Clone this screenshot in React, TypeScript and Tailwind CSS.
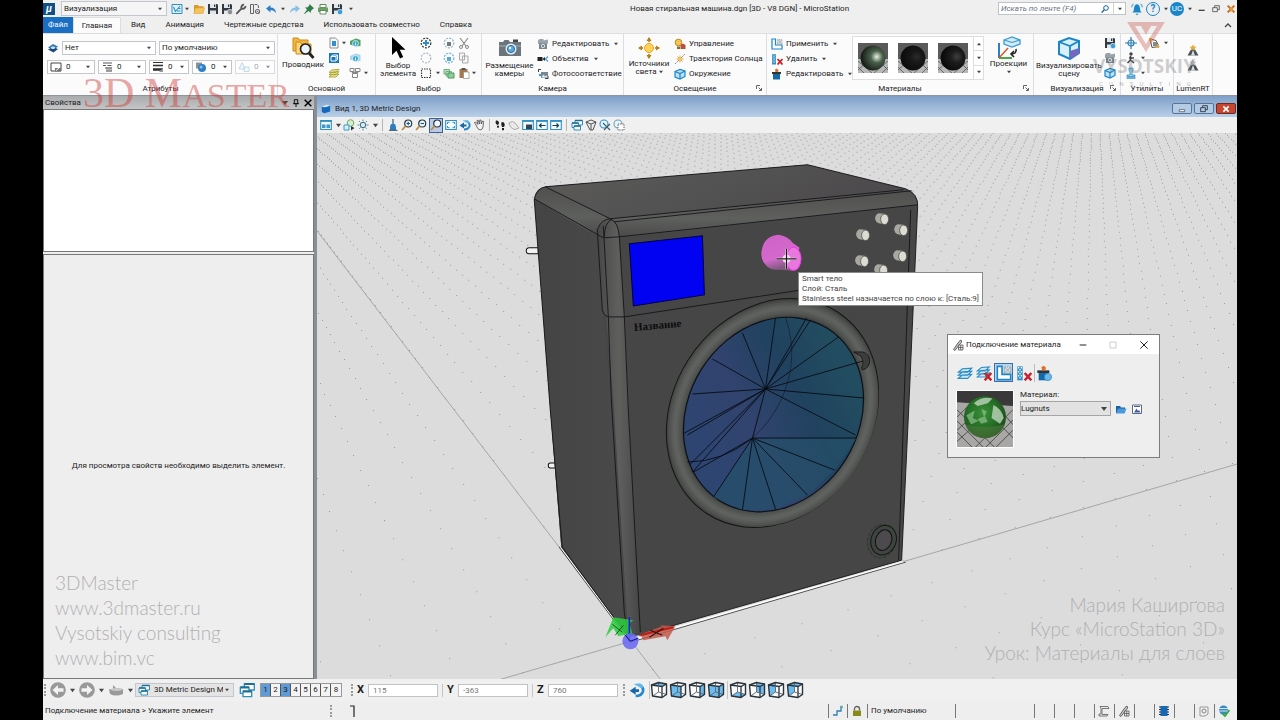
import type { ReactNode } from "react";
import clsx from "clsx";

type IconProps = { className?: string; children?: ReactNode };

const Icon = ({ className = "size-3", children }: IconProps) => (
  <svg viewBox="0 0 12 12" className={clsx("shrink-0", className)} fill="none" aria-hidden="true">
    {children}
  </svg>
);

const Caret = ({ className = "size-1" }: { className?: string }) => (
  <svg viewBox="0 0 6 4" className={clsx("shrink-0", className)} aria-hidden="true">
    <path d="M0 0h6L3 4z" fill="#444" />
  </svg>
);

/* ---------- icons ---------- */

const Floppy = ({ badge }: { badge?: string }) => (
  <Icon>
    <path d="M1 1h9l1 1v9H1z" fill="#333a42" />
    <path d="M3 1h6v4H3zM3 7.5h6V11H3z" fill="#dfe6ec" />
    <path d="M7 1.5h1.3v2.5H7z" fill="#333a42" />
    {badge && <circle cx="9" cy="9" r="2.7" fill={badge} stroke="#fff" strokeWidth=".6" />}
  </Icon>
);
const Folder = () => (
  <Icon>
    <path d="M1 10V2.5Q1 2 1.5 2H5l1 1.3h4.5V5H3z" fill="#d9992a" />
    <path d="M.8 10.5 2.5 4.8h9L10 10.5z" fill="#f5c35a" stroke="#d9992a" strokeWidth=".5" />
  </Icon>
);
const Wrench = () => (
  <Icon>
    <path d="M1.8 10.4 6.4 5.6M6.4 5.6Q5.7 3 8.3 1.6M6.4 5.6Q9 6.5 10.5 3.8" stroke="#555" strokeWidth="1.8" strokeLinecap="round" />
  </Icon>
);
const DocGear = () => (
  <Icon>
    <path d="M1.5 1.5h3v9h-3zM5.5 1.5h2.5l1.5 1.5v2" stroke="#666" />
    <circle cx="8.5" cy="8.5" r="2" stroke="#666" strokeWidth="1.2" />
    <circle cx="8.5" cy="8.5" r=".6" fill="#666" />
  </Icon>
);
const Undo = ({ flip, color = "#2c7fc7" }: { flip?: boolean; color?: string }) => (
  <Icon className={clsx("size-3", flip && "-scale-x-100")}>
    <path d="M1 5.500 5.500 2v2.500Q10.500 4.500 11 10 9 7.200 5.500 7.100V9.500z" fill={color} />
  </Icon>
);
const Pin = () => (
  <Icon>
    <path d="m6.500 1 4.500 4.300-1.200.6-2 2 .2 2L5.500 8 1.500 11 1 10.800 4 6.700 2 4.300l2.300.2 2-2z" fill="#2e7d4a" />
  </Icon>
);
const Printer = () => (
  <Icon>
    <path d="M3 1.500h6v3H3z" fill="#fff" stroke="#5d8a5a" />
    <path d="M1 4.500h10v4.500H1z" fill="#6ba160" />
    <path d="M3 7.500h6V11H3z" fill="#fff" stroke="#4b7a48" strokeWidth=".8" />
  </Icon>
);
const ViewChart = () => (
  <Icon>
    <path d="M1 1.500h10v9H1z" fill="#e2f2fb" stroke="#2f8fc4" />
    <path d="m2.500 4 2 4.500L9 3M6 8h3.500M7 5.500h2.500" stroke="#2f8fc4" strokeWidth="1.100" />
  </Icon>
);
const LayerStack = ({ color = "#2f8fc4", fill = "#cfe8f8", className }: { color?: string; fill?: string; className?: string }) => (
  <Icon className={className}>
    <path d="m1 10 3-2.500 7-.5-3 3zM1 7.700l3-2.500 7-.5-3 3zM1 5.400l3-2.500 7-.5-3 3z" fill={fill} stroke={color} strokeWidth=".9" />
  </Icon>
);
const RedCross = () => <path d="m6.500 6 5 5.500m0-5.500-5 5.500" stroke="#c8202a" strokeWidth="1.800" />;
const ColorSwatch = () => (
  <Icon>
    <path d="M1 2h10v8H1z" fill="#fff" stroke="#444" />
    <path d="M5 10.500V7h6v3.500z" fill="#777" />
    <path d="M6 9.500 9 7" stroke="#fff" />
  </Icon>
);
const LineStyle = () => (
  <Icon>
    <path d="M2 2h9M2 4.500h3m1.500 0h4M4 7h7M5 10h6" stroke="#555" strokeWidth="1.100" />
    <path d="M5 6h6v4.500H5z" fill="#888" fillOpacity=".6" />
  </Icon>
);
const LineWeight = () => (
  <Icon>
    <path d="M1 1.500h10" stroke="#333" />
    <path d="M1 4.500h10" stroke="#333" strokeWidth="1.600" />
    <path d="M1 8.500h10" stroke="#333" strokeWidth="2.600" />
    <path d="m7 11 4-4v4z" fill="#999" />
  </Icon>
);
const Transparency = () => (
  <Icon>
    <path d="M1 1.500h6v6H1z" fill="#8a939b" />
    <circle cx="7" cy="7" r="4" fill="#2f7fc4" />
    <circle cx="6" cy="6" r="1.500" fill="#8cc2ee" />
  </Icon>
);
const Priority = () => (
  <Icon>
    <path d="m4 1.500 3 6.500H1zM6 6h5v4.500H6z" stroke="#9cc6d6" fill="#eef7fa" />
  </Icon>
);
const LevelLayers = () => (
  <Icon>
    <path d="M1 5.500 6 2l5 2.500L6.500 8z" fill="#3577b8" />
    <path d="M1 7.500 6 5l5 2-4.500 3.500z" fill="#174a80" />
    <ellipse cx="6" cy="5.800" rx="2.200" ry="1.200" fill="#cfe3f4" />
  </Icon>
);
const Explorer = () => (
  <svg viewBox="0 0 24 24" className="size-6" fill="none" aria-hidden="true">
    <path d="M2 4V2h5l1.500 2H17v11H2z" fill="#f2b63e" stroke="#c98a1c" />
    <path d="M5 8V6h4l1.500 2H20v10H5z" fill="#ffd77a" stroke="#c98a1c" />
    <circle cx="14.500" cy="13" r="5" fill="#eaf5ff" stroke="#222" strokeWidth="1.700" />
    <path d="m18 17 4.500 5" stroke="#222" strokeWidth="2.800" />
  </svg>
);
const DocBlue = () => (
  <Icon>
    <path d="M2 1h5.500L10 3.500V11H2z" fill="#f2f8fd" stroke="#777" strokeWidth=".8" />
    <path d="M4 4h4v5H4z" fill="#2f8fd0" />
  </Icon>
);
const BlueBox = () => (
  <Icon>
    <path d="M1 1h10v10H1z" fill="#1779bf" />
    <path d="M3 4.500 5 3h4.500v4.500L8 9H3zM3 4.500h5V9M8 4.500 9.500 3" stroke="#fff" />
  </Icon>
);
const InfoTag = ({ color }: { color: string }) => (
  <Icon>
    <path d="m1 4 6-2.500L11.500 3v6l-5 .5L1 7.500z" fill={color} />
    <circle cx="6.500" cy="6.500" r="3" fill="#38a5c9" stroke="#fff" strokeWidth=".7" />
    <path d="M6.500 4.800v.8m0 .7v2" stroke="#fff" strokeWidth="1.100" />
  </Icon>
);
const KeyGrid = () => (
  <Icon>
    <path d="M1 1.500h4v3H1zM6.500 1.500H11v3H6.500zM3.500 6.500h5v4h-5zM6 4.500v2M3 4.500v1h6v-1" stroke="#888" />
  </Icon>
);
const CursorArrow = () => (
  <svg viewBox="0 0 16 24" className="h-6 w-4" aria-hidden="true">
    <path d="M2 1v18l4.500-4.200L10 22.500l3.200-1.500-3.400-7.200H15.500z" fill="#000" />
  </svg>
);
const DotRing = ({ color, center }: { color: string; center?: ReactNode }) => (
  <Icon>
    <circle cx="6" cy="6" r="4.800" stroke={color} strokeWidth="1.200" strokeDasharray="2 1.200" />
    {center}
  </Icon>
);
const Scissors = () => (
  <Icon>
    <path d="M2 1l6 8M10 1 4 9" stroke="#888" strokeWidth="1.100" />
    <circle cx="3" cy="10" r="1.500" stroke="#888" />
    <circle cx="9" cy="10" r="1.500" stroke="#888" />
  </Icon>
);
const Copy = ({ color = "#aaa", fill = "#f6f6f6" }: { color?: string; fill?: string }) => (
  <Icon>
    <path d="M1.500 1h5v7h-5zM4.500 4h5.500v7H4.500z" fill={fill} stroke={color} />
  </Icon>
);
const GreenCopies = () => (
  <Icon>
    <path d="M1 2.500h5.500V7H1zM3 4.500h5.500V9H3z" fill="#bfe3c4" stroke="#6ab07a" />
    <path d="M5 6h6v5H5z" fill="#8fd09a" stroke="#4f9a60" />
  </Icon>
);
const Paste = () => (
  <Icon>
    <path d="M1.500 2h8v9h-8z" fill="#a9764a" />
    <path d="M3.500 1h4v2h-4z" fill="#555" />
    <path d="M5.500 5H11v6.500H5.500z" fill="#fff" stroke="#888" strokeWidth=".7" />
  </Icon>
);
const Marquee = () => (
  <Icon>
    <path d="M1.500 2h9v8.500h-9z" stroke="#333" strokeDasharray="1.500 1" strokeWidth="1.100" />
  </Icon>
);
const BigCamera = () => (
  <svg viewBox="0 0 24 20" className="h-5 w-6" fill="none" aria-hidden="true">
    <path d="M1 4h4l1.500-2h4L12 4h11v14H1z" fill="#6c757c" />
    <path d="M1 8h22" stroke="#aab2b8" />
    <path d="M15 1.500h5V4h-5z" fill="#444" />
    <circle cx="13" cy="11" r="5.500" fill="#e5ecf2" />
    <circle cx="13" cy="11" r="3.600" fill="#58a9e0" stroke="#2d6ea8" />
    <circle cx="12" cy="10" r="1.200" fill="#fff" />
  </svg>
);
const CameraEdit = () => (
  <Icon>
    <path d="M1 2.500 2.500 1h4V6H1zM6.500 2.500 11 1.500v4l-4.500 1z" fill="#9aa3aa" />
    <path d="M2 5.500h8V11H2z" fill="#7b858d" />
    <circle cx="6" cy="8" r="2" fill="#e6eef4" />
    <circle cx="6" cy="8" r=".9" fill="#555" />
  </Icon>
);
const Lens = () => (
  <Icon>
    <path d="M.500 4h5v4h-5zM5.500 6 8 4v4z" fill="#222" />
    <path d="M11 3.500 8.500 6 11 8.500" stroke="#3b9cd9" strokeWidth="1.100" />
  </Icon>
);
const PhotoMatch = () => (
  <Icon>
    <path d="M1 1.500h3M1.500 1v3M11 8v3M8 10.500h3" stroke="#444" />
    <path d="M4 4h7v6H4z" fill="#7b858d" />
    <path d="m4.500 9.500 2-3 1.500 2 1.200-1.300 1.300 2.300z" fill="#e6eef4" />
    <circle cx="3" cy="7" r="1.200" fill="#3b9cd9" />
  </Icon>
);
const LightSource = () => (
  <svg viewBox="0 0 24 24" className="size-6" fill="none" aria-hidden="true">
    <path d="M12 2v20M2 12h20" stroke="#a97a1c" strokeWidth="1.500" />
    <path d="m12 1 2.600 4H9.400zM12 23l-2.600-4h5.200zM1 12l4-2.600v5.200zM23 12l-4 2.600V9.400z" fill="#b3801c" />
    <circle cx="12" cy="12" r="6" fill="#fbfbfc" />
    <circle cx="12" cy="12" r="4.500" fill="#ffd257" stroke="#e5a52a" />
  </svg>
);
const LightManage = () => (
  <Icon>
    <circle cx="4.500" cy="4.500" r="3.300" fill="#f7c74f" stroke="#b8862a" />
    <path d="M3 8.500h3V11H3z" fill="#8a6a2c" />
    <path d="M6.500 7 9 5.500 11.500 7v4h-5z" fill="#b8503a" />
  </Icon>
);
const SunPath = () => (
  <Icon>
    <path d="M6 2.500v7M2.500 6h7M3.500 3.500l5 5M8.500 3.500l-5 5" stroke="#e0a93a" />
    <path d="M1 11 11 1" stroke="#888" strokeDasharray="2 1" />
    <circle cx="6" cy="6" r="1.600" fill="#f3c14b" />
  </Icon>
);
const CubeBlue = () => (
  <Icon>
    <path d="m1 3.500 5-2 5 1.500v5.500l-5 2.500-5-2z" fill="#bfe1f7" stroke="#1c86c7" strokeWidth="1.200" />
    <path d="m1 3.500 5 2 5-2.500M6 5.500V11" stroke="#1c86c7" strokeWidth="1.200" />
  </Icon>
);
const ApplyMaterial = ({ className }: { className?: string }) => (
  <Icon className={className}>
    <path d="M1 1h3.500v6H11v4H1z" fill="#fff" stroke="#1c86c7" strokeWidth="1.200" />
    <path d="M6.500 1.500H11V6H6.500z" fill="#dfe4e8" stroke="#8c9499" strokeWidth=".7" strokeDasharray="1 .6" />
    <path d="m7 2 3.500 3.500M10.500 2 7 5.500" stroke="#8c9499" strokeWidth=".6" />
  </Icon>
);
const RemoveMaterial = ({ className }: { className?: string }) => (
  <Icon className={className}>
    <path d="M1 1h4v10.500H1z" fill="#2f8fc4" />
    <path d="M1.500 2h1m1 0h1M2.500 3.500h1M1.500 5h1m1 0h1M2.500 6.500h1M1.500 8h1m1 0h1M2.500 9.500h1" stroke="#e4f3fb" strokeWidth="1.100" />
    <RedCross />
  </Icon>
);
const EditMaterial = ({ badge, className }: { badge?: boolean; className?: string }) => (
  <Icon className={className}>
    <path d="M2 5h7v6.500H2z" fill="#1467a8" />
    <path d="M1 4h9v2H1z" fill="#333" />
    <path d="M4.500 4 4 1.500 6 .500 7.500 2 7 4z" fill="#e2702a" />
    {badge && <circle cx="9" cy="9" r="2.700" fill="#6cb8e8" stroke="#2f8fc4" strokeWidth=".6" />}
  </Icon>
);
const Projections = () => (
  <svg viewBox="0 0 24 24" className="size-6" fill="none" aria-hidden="true">
    <path d="m7 4 8-3 8 3v4l-8 3-8-3z" fill="#d3ebfa" stroke="#3a9ad3" strokeWidth="1.300" />
    <path d="m7 4 8 2.500L23 4" stroke="#3a9ad3" strokeWidth="1.100" />
    <path d="M2 7v15" stroke="#2f7fc4" strokeWidth="2" />
    <path d="M2 22h13" stroke="#4aa845" strokeWidth="2" />
    <path d="M2 22 11 12" stroke="#d8562a" strokeWidth="1.500" />
    <path d="M19 13q1 5-5 5m3-3-3 3 3 3" stroke="#222" strokeWidth="1.600" />
  </svg>
);
const RenderCube = () => (
  <svg viewBox="0 0 24 24" className="size-6" fill="none" aria-hidden="true">
    <path d="m2 6 10-4 10 3v12l-9 6-11-5z" fill="#d9effb" stroke="#1c86c7" strokeWidth="2" />
    <path d="M13 10v13M2 6l11 4 9-5" stroke="#1c86c7" strokeWidth="1.800" />
    <path d="m13 15 9-3v6l-9 5z" fill="#7468c0" />
  </svg>
);
const Crosshair = () => (
  <Icon>
    <path d="M6 0v12M0 6h12" stroke="#2f7fb4" strokeWidth="1.200" />
    <circle cx="6" cy="6" r="3" stroke="#2f7fb4" strokeWidth="1.200" />
  </Icon>
);
const PolyTool = () => (
  <Icon>
    <path d="m2 2 6 1.500 3 6-7 1z" stroke="#555" />
    <path d="M1 1h3v3H1zM8 8h3v3H8z" fill="#e0a93a" />
    <path d="M5 5h4v4H5z" fill="#888" />
  </Icon>
);
const Walker = () => (
  <Icon>
    <circle cx="6" cy="2" r="1.700" fill="#444" />
    <path d="M5.500 4v4l-3 3M5.500 8 9 11M4 6h5" stroke="#444" strokeWidth="1.600" />
  </Icon>
);
const Stamp = () => (
  <Icon>
    <path d="M4 1h4v2.500L7 5v3h3v1.500H2V8h3V5L4 3.500z" fill="#9fcfeb" stroke="#2f8fc4" strokeWidth=".8" />
    <path d="M1.500 11h9" stroke="#2f8fc4" strokeWidth="1.400" />
  </Icon>
);
const LumenTriangle = ({ color }: { color: string }) => (
  <Icon>
    <path d="m6 2 5.500 9.500H.500z" fill="#4a5257" />
    <path d="m6 6 2 5.500H4z" fill="#d8dde0" />
    <path d="m6 .500 1.200 2 2.300.2-1.700 1.600.5 2.300L6 5.500 3.700 6.600l.5-2.300-1.700-1.600 2.300-.2z" fill={color} />
  </Icon>
);
const Windows = ({ className }: { className?: string }) => (
  <Icon className={className}>
    <path d="M4 1.500h7.500V6H4z" fill="#fff" stroke="#2f8fb8" />
    <path d="M1 4h6.500v4.500H1z" fill="#fff" stroke="#2f8fb8" />
    <path d="M3 7h6.500v4H3z" fill="#fff" stroke="#2f8fb8" />
    <path d="M4 1.500h7.500M1 4h6.500M3 7h6.500" stroke="#1d6f98" strokeWidth="1.600" />
  </Icon>
);
const Screen = ({ glyph }: { glyph: "gear" | "left" | "right" | "fit" | "camera" }) => (
  <Icon>
    <path d="M.700 1.500h10.600v9H.700z" fill="#f4fafd" stroke="#2f8fc4" strokeWidth="1.100" />
    {glyph !== "fit" && <path d="M.5 2h11" stroke="#2f8fc4" strokeWidth="1.800" />}
    {glyph === "left" && <path d="M9.500 6.500h-6m2-2-2 2 2 2" stroke="#14405c" strokeWidth="1.200" />}
    {glyph === "right" && <path d="M2.500 6.500h6m-2-2 2 2-2 2" stroke="#14405c" strokeWidth="1.200" />}
    {glyph === "gear" && <path d="M2 5.500h3.500V9H2zM6.500 5.500H10V9H6.500z" fill="#3a9ac8" />}
    {glyph === "fit" && <path d="M2.500 5V3.300h2M7.500 3.300h2V5M9.500 7v1.700h-2M4.500 8.700h-2V7" stroke="#2f8fc4" />}
    {glyph === "camera" && <path d="M4 5.500h6V10H4z" fill="#345" />}
  </Icon>
);
const Sun = () => (
  <Icon>
    <path d="M6 .500v11M.500 6h11M2 2l8 8M10 2l-8 8" stroke="#4a9a8a" strokeDasharray="2 1 5 1" />
    <circle cx="6" cy="6" r="2.700" fill="#dfe9ee" stroke="#3d6c88" />
  </Icon>
);
const Broom = () => (
  <Icon>
    <path d="M6 0v5" stroke="#2c6aa0" strokeWidth="1.300" />
    <path d="M4 5h4l1 2.500V11H3V7.500z" fill="#2f7fbf" />
    <path d="M2 11.300h8.500" stroke="#3a4750" />
  </Icon>
);
const Magnify = ({ sign }: { sign?: string }) => (
  <Icon>
    <circle cx="7.200" cy="4.500" r="3.500" fill="#f2f8fb" stroke="#2a3a44" strokeWidth="1.200" />
    <path d="M4.700 7 1 11" stroke="#c08a3a" strokeWidth="1.800" />
    {sign && <path d={sign} stroke="#1a5c8c" strokeWidth="1.200" />}
  </Icon>
);
const Hand = () => (
  <Icon>
    <path d="M3 6 1.500 3.500l1-.5L5 5.500 4 1.500l1.200-.3L6.500 5 6.800 1 8 1.100 8.300 5 9.500 2l1 .3L10 8q-.5 3-3 3-2.500-.5-4-5z" fill="#f4f4f4" stroke="#4a4a4a" strokeWidth=".8" />
  </Icon>
);
const RotateView = ({ className }: { className?: string }) => (
  <Icon className={className}>
    <path d="M8.500 2.500Q11 4 10.500 7 9.500 10.500 5 10.500" stroke="#2486cc" strokeWidth="2" />
    <path d="M.500 6.500 5 3.500v2h2.500v2H5v2z" fill="#1668a8" />
    <path d="m3.500 1.500 5-.5 2.500 3-2 .500z" fill="#62b8ee" />
  </Icon>
);
const Feet = () => (
  <Icon>
    <path d="M2 1.500q2.500-.5 3 2 .2 2-1.500 2.500L2 5Q1 2.500 2 1.500zM2.800 7l2-.5.200 2-1.500.5z" fill="#222" />
    <path d="M8 3q2.500 0 2.700 2.300.1 1.700-.7 2.700H8Q6.500 4 8 3zM8 9h2v2.300H8z" fill="#222" />
  </Icon>
);
const Plane = () => (
  <Icon>
    <path d="M1 4q4-3 6 0l4 5-4 1.500q-5-1-6-6.500z" fill="#e9e9e9" stroke="#aaa" />
  </Icon>
);
const ClipCube = () => (
  <Icon>
    <path d="m1 3 5-2 5 2-3 8H5z" fill="#eee" stroke="#555" />
    <path d="m1 3 5 2 5-2M6 5v6" stroke="#555" />
  </Icon>
);
const CutCircle = ({ color, dash }: { color: string; dash?: boolean }) => (
  <Icon>
    <circle cx="5" cy="5" r="4" fill="#e8f4fa" stroke={color} strokeWidth="1.100" />
    {dash ? <path d="M5 5h6v6H5z" fill="#fff" stroke="#555" strokeDasharray="1.200 1" /> : <path d="m4 4 7 7m0-6-6 6" stroke="#3a5a6c" strokeWidth="1.100" />}
  </Icon>
);
const GreenShapes = () => (
  <Icon>
    <circle cx="7.500" cy="4" r="3.300" fill="#d6ecd0" stroke="#6aae5a" />
    <path d="M1 6h5v5H1z" fill="#d8edf8" stroke="#3a9ac8" />
    <path d="m8 7 3.500 2L8 11.500z" fill="#333" />
  </Icon>
);
const ViewCube = ({ face }: { face: string }) => (
  <svg viewBox="0 0 18 18" className="size-[18px]" fill="none" aria-hidden="true">
    <path d="m1.500 4 7-2.500 8 1.500v10.500l-4 3-10-1.500z" fill="#fafafa" />
    <path d={face} fill="#6cbcf0" />
    <path d="M1.500 4 12 5.500l4.500-2.500M12 5.500v11" stroke="#2b333a" strokeWidth="1.300" />
    <path d="M8.500 1.500v9.500l8 2.500M8.500 11l-6 4" stroke="#5a646c" strokeWidth=".9" />
    <path d="m1.500 4 7-2.500 8 1.500v10.500l-4.500 3-9.500-1.500z" stroke="#2b333a" strokeWidth="1.400" strokeLinejoin="round" />
  </svg>
);
const NavArrow = ({ back }: { back?: boolean }) => (
  <svg viewBox="0 0 16 16" className={clsx("size-4", !back && "-scale-x-100")} aria-hidden="true">
    <circle cx="8" cy="8" r="7.800" fill="#999" />
    <path d="M2.500 8 8 3v3.300h5.500v3.400H8V13z" fill="#f3f3f3" />
  </svg>
);
const DialogGlyph = () => (
  <Icon>
    <path d="M1.500 10.500 7 2.500l2-1.500.7 2L7 6l-4 5.500z" fill="#ccc" stroke="#555" strokeWidth=".9" />
    <path d="M6.500 6H11v5H6.500zM6.500 8.500H11M8.700 6v5" fill="#eee" stroke="#555" strokeWidth=".8" />
  </Icon>
);

/* ---------- controls ---------- */

type ComboProps = { label: string; value: string; icon?: ReactNode; className?: string; muted?: boolean };

const Combo = ({ label, value, icon, className, muted }: ComboProps) => (
  <label className={clsx("relative flex items-center gap-1 border border-[#c3c7cc] px-[2px]", className)}>
    {icon}
    <select
      aria-label={label}
      className={clsx("min-w-0 flex-1 appearance-none bg-transparent pr-2 outline-none", muted && "text-gray-500")}
    >
      <option>{value}</option>
    </select>
    <Caret className="absolute right-1 size-1" />
  </label>
);

const IconButton = ({ label, children, className }: { label: string; children: ReactNode; className?: string }) => (
  <button type="button" aria-label={label} className={clsx("flex items-center justify-center gap-1", className)}>
    {children}
  </button>
);

const RibbonRow = ({ icon, text, menu }: { icon: ReactNode; text: string; menu?: boolean }) => (
  <button type="button" className="flex h-[15px] items-center gap-[3px] whitespace-nowrap">
    {icon}
    <span>{text}</span>
    {menu && <Caret className="ml-[2px] size-1" />}
  </button>
);

const Launcher = () => (
  <svg viewBox="0 0 6 6" className="absolute right-1 bottom-1 size-[6px]" fill="none" aria-hidden="true">
    <path d="M.5 4V.5H4M2.500 2.500l3 3M5.500 3v2.500H3" stroke="#666" />
  </svg>
);

type GroupProps = { title: string; className: string; launcher?: boolean; children: ReactNode };

const Group = ({ title, className, launcher, children }: GroupProps) => (
  <section className={clsx("relative flex shrink-0 flex-col border-r border-[#dcdee1]", className)}>
    <div className="flex flex-1 items-start pt-[2px]">{children}</div>
    <h2 className="h-3 text-center leading-3">{title}</h2>
    {launcher && <Launcher />}
  </section>
);

/* ---------- title bar, tabs, ribbon ---------- */

const TitleBar = () => (
  <header className="flex h-[17px] items-center gap-[2px] pr-px">
    <span className="flex size-3 items-center justify-center bg-[#0d4f86] text-[10px] leading-3 font-bold text-white italic">µ</span>
    <Combo label="Рабочий процесс" value="Визуализация" className="ml-1 h-[15px] w-[106px] bg-[#f5f5f5]" />
    <IconButton label="Вид" className="ml-[2px] gap-[2px]"><ViewChart /><Caret /></IconButton>
    <IconButton label="Открыть" className="ml-[2px]"><Folder /></IconButton>
    <IconButton label="Сохранить"><Floppy /></IconButton>
    <IconButton label="Сохранить установки"><Floppy badge="#8a8f94" /></IconButton>
    <IconButton label="Инструменты"><Wrench /></IconButton>
    <IconButton label="Сжать"><DocGear /></IconButton>
    <IconButton label="Отменить" className="ml-[2px]"><Undo /><Caret /></IconButton>
    <IconButton label="Повторить" className="ml-[2px]"><Undo flip color="#8bbfe4" /></IconButton>
    <IconButton label="Закрепить"><Pin /></IconButton>
    <IconButton label="Печать"><Printer /></IconButton>
    <IconButton label="Сохранить как"><Floppy badge="#3b9cd9" /></IconButton>
    <IconButton label="Настроить панель" className="ml-1"><Caret /></IconButton>
    <h1 className="flex-1 pl-32 text-center whitespace-nowrap">Новая стиральная машина.dgn [3D - V8 DGN] - MicroStation</h1>
    <div className="mr-[2px] flex h-[13px] w-[128px] items-center border border-[#bfc3c8] bg-white">
      <input aria-label="Поиск" placeholder="Искать по ленте (F4)" className="min-w-0 flex-1 px-[2px] italic outline-none placeholder:text-gray-500" />
      <svg viewBox="0 0 12 12" className="mr-1 size-2" fill="none" aria-hidden="true">
        <circle cx="7.500" cy="4.500" r="3.500" stroke="#1a5fa0" strokeWidth="1.500" />
        <path d="M5 7 1 11.500" stroke="#1a5fa0" strokeWidth="2" />
      </svg>
      <span className="flex h-full w-3 items-center justify-center border-l border-[#cfd2d6]"><Caret /></span>
    </div>
    <IconButton label="Уведомления">
      <Icon className="size-[14px]">
        <path d="M2 9q1.500-1 1.500-4Q4 2 6 2t2.500 3q0 3 1.500 4zM5 10h2v1H5z" fill="#1a86c7" />
        <path d="M1.500 4.500q0-2 1.500-3M10.500 4.500q0-2-1.500-3" stroke="#1a86c7" strokeWidth=".8" />
      </Icon>
    </IconButton>
    <IconButton label="Справка">
      <span className="flex size-[14px] items-center justify-center rounded-full border border-[#1a86c7] text-[10px] leading-3 font-bold text-[#1a86c7]">?</span>
      <Caret />
    </IconButton>
    <IconButton label="Учетная запись">
      <span className="flex size-[14px] items-center justify-center rounded-full bg-[#1a86c7] text-white">UC</span>
      <Caret />
    </IconButton>
    <IconButton label="Свернуть" className="ml-1">
      <Icon className="size-2"><path d="M1 8h9" stroke="#444" strokeWidth="2" /></Icon>
    </IconButton>
    <IconButton label="Восстановить" className="ml-1">
      <Icon className="size-2"><path d="M1 4h7v6H1zM4 4V1h7v6H8" stroke="#555" strokeWidth="1.300" /></Icon>
    </IconButton>
    <IconButton label="Закрыть" className="ml-1">
      <Icon className="size-[10px]"><path d="m2 2 8 8M10 2l-8 8" stroke="#c96a1c" strokeWidth="2.400" /><path d="M5 4h3v5H5z" fill="#e8a13a" /></Icon>
    </IconButton>
  </header>
);

const TABS = ["Вид", "Анимация", "Чертежные средства", "Использовать совместно", "Справка"];

const Tabs = () => (
  <nav className="flex h-4 items-stretch leading-4 whitespace-nowrap">
    <a href="#file" className="w-[30px] bg-[#1a6fc4] text-center text-white">Файл</a>
    <a href="#home" className="w-12 border-x border-t border-[#dcdee1] bg-[#fbfbfc] text-center">Главная</a>
    {TABS.map((tab) => (
      <a key={tab} href={`#${tab}`} className="px-[10px]">{tab}</a>
    ))}
    <button type="button" aria-label="Свернуть ленту" className="mr-[5px] ml-auto">
      <svg viewBox="0 0 8 6" className="h-[6px] w-2" fill="none"><path d="m1 5 3-3 3 3" stroke="#444" strokeWidth="1.300" /></svg>
    </button>
  </nav>
);

const Sphere = ({ id, light, mid, dark }: { id: string; light: string; mid: string; dark: string }) => (
  <svg viewBox="0 0 30 30" className="size-[30px]" aria-hidden="true">
    <defs>
      <radialGradient id={id} cx=".65" cy=".45" r=".6">
        <stop offset="0" stopColor={light} />
        <stop offset=".4" stopColor={mid} />
        <stop offset="1" stopColor={dark} />
      </radialGradient>
    </defs>
    <path d="M0 0h30v30H0z" fill="#5a5a5a" />
    <path d="M0 16h30v14H0z" fill="#b8b8b8" />
    <path d="m0 18 14 12M0 24l6 6M30 18 16 30M30 24l-6 6M0 27l10-9M30 27l-9-9" stroke="#555" strokeWidth=".8" />
    <circle cx="15" cy="15" r="12.500" fill={`url(#${id})`} />
  </svg>
);

const Ribbon = () => (
  <div className="flex h-[63px] border-t border-b border-t-[#dcdee1] border-b-[#8f959c] bg-[#fbfbfc] pl-px">
    <Group title="Атрибуты" className="w-[234px]">
      <div className="flex flex-1 flex-col gap-[5px] pt-[5px] pr-[2px] pl-[3px]">
        <div className="flex items-center gap-[3px]">
          <IconButton label="Слои"><LevelLayers /></IconButton>
          <Combo label="Слой" value="Нет" className="h-[14px] w-[94px] bg-white" />
          <Combo label="Шаблон" value="По умолчанию" className="h-[14px] flex-1 bg-white" />
        </div>
        <div className="flex items-center gap-[3px]">
          <Combo label="Цвет" value="0" icon={<ColorSwatch />} className="h-[14px] flex-1 bg-white" />
          <Combo label="Стиль" value="0" icon={<LineStyle />} className="h-[14px] flex-1 bg-white" />
          <Combo label="Толщина" value="0" icon={<LineWeight />} className="h-[14px] w-10 bg-white" />
          <Combo label="Прозрачность" value="0" icon={<Transparency />} className="h-[14px] w-10 bg-white" />
          <Combo label="Приоритет" value="0" icon={<Priority />} className="h-[14px] w-10 bg-white opacity-60" muted />
        </div>
      </div>
    </Group>
    <Group title="Основной" className="w-[98px]">
      <button type="button" className="flex w-[50px] flex-col items-center">
        <Explorer />
        <span>Проводник</span>
      </button>
      <div className="grid grid-cols-[18px_12px_6px] items-center gap-x-[3px] gap-y-[3px] pt-px">
        <IconButton label="Модели" className="gap-[2px]"><DocBlue /><Caret /></IconButton>
        <IconButton label="Атрибуты вида"><InfoTag color="#4aa35a" /></IconButton>
        <span />
        <IconButton label="Ссылки" className="justify-start"><BlueBox /></IconButton>
        <IconButton label="Сведения"><InfoTag color="#a8d4ec" /></IconButton>
        <span />
        <IconButton label="Диспетчер слоев" className="justify-start"><LayerStack color="#a8a02c" fill="#ece9a6" /></IconButton>
        <IconButton label="Клавиши"><KeyGrid /></IconButton>
        <Caret />
      </div>
    </Group>
    <Group title="Выбор" className="w-[106px]">
      <button type="button" className="flex w-[44px] flex-col items-center leading-[8px]">
        <CursorArrow />
        <span className="pt-[2px]">Выбор<br />элемента</span>
      </button>
      <div className="grid grid-cols-[20px_12px_18px] items-center gap-x-[3px] gap-y-[3px] pt-px">
        <IconButton label="Выбрать все" className="justify-start"><DotRing color="#333" center={<path d="M6 3v6M3 6h6" stroke="#2f8fc4" strokeWidth="2" />} /></IconButton>
        <IconButton label="Закрепить"><DotRing color="#8fb7cc" center={<path d="M4 5h4v4H4z" fill="#777" />} /></IconButton>
        <IconButton label="Вырезать" className="justify-start"><Scissors /></IconButton>
        <IconButton label="Снять выбор" className="justify-start"><DotRing color="#a9b7c0" /></IconButton>
        <IconButton label="Открепить"><DotRing color="#6fb2d8" center={<path d="M4 5h4v4H4z" fill="#58a9d8" />} /></IconButton>
        <IconButton label="Копировать" className="justify-start"><Copy /></IconButton>
        <IconButton label="Рамка" className="justify-start"><Marquee /><Caret /></IconButton>
        <IconButton label="Группа"><GreenCopies /></IconButton>
        <IconButton label="Вставить" className="justify-start gap-[2px]"><Paste /><Caret /></IconButton>
      </div>
    </Group>
    <Group title="Камера" className="w-[142px]">
      <button type="button" className="flex w-[55px] flex-col items-center pt-[2px] leading-[8px]">
        <BigCamera />
        <span className="pt-1">Размещение<br />камеры</span>
      </button>
      <div className="flex flex-col">
        <RibbonRow icon={<CameraEdit />} text="Редактировать" menu />
        <RibbonRow icon={<Lens />} text="Объектив" menu />
        <RibbonRow icon={<PhotoMatch />} text="Фотосоответствие" />
      </div>
    </Group>
    <Group title="Освещение" className="w-[143px]" launcher>
      <button type="button" className="flex w-[50px] flex-col items-center leading-[8px]">
        <LightSource />
        <span>Источники</span>
        <span className="flex items-center gap-[2px]">света <Caret /></span>
      </button>
      <div className="flex flex-col">
        <RibbonRow icon={<LightManage />} text="Управление" />
        <RibbonRow icon={<SunPath />} text="Траектория Солнца" />
        <RibbonRow icon={<CubeBlue />} text="Окружение" />
      </div>
    </Group>
    <Group title="Материалы" className="w-[267px]" launcher>
      <div className="flex w-[85px] flex-col pl-1">
        <RibbonRow icon={<ApplyMaterial />} text="Применить" menu />
        <RibbonRow icon={<RemoveMaterial />} text="Удалить" menu />
        <RibbonRow icon={<EditMaterial />} text="Редактировать" menu />
      </div>
      <div className="flex h-11 border border-[#dcdee1] bg-white">
        <div className="flex items-center gap-[10px] px-[5px]">
          <IconButton label="Материал 1"><Sphere id="s1" light="#e8f2e6" mid="#4a604c" dark="#182018" /></IconButton>
          <IconButton label="Материал 2"><Sphere id="s2" light="#2a2a2a" mid="#181818" dark="#0c0c0c" /></IconButton>
          <IconButton label="Материал 3"><Sphere id="s3" light="#3c4042" mid="#1c1c1c" dark="#0a0a0a" /></IconButton>
        </div>
        <div className="flex w-[10px] flex-col divide-y divide-[#dcdee1] border-l border-[#dcdee1]">
          <IconButton label="Вверх" className="flex-1"><Caret className="size-1 rotate-180" /></IconButton>
          <IconButton label="Вниз" className="flex-1"><Caret /></IconButton>
          <IconButton label="Все материалы" className="flex-1"><Caret /></IconButton>
        </div>
      </div>
      <button type="button" className="flex flex-1 flex-col items-center leading-[8px]">
        <Projections />
        <span>Проекции</span>
        <Caret className="mt-[2px] size-1" />
      </button>
    </Group>
    <Group title="Визуализация" className="w-[87px]" launcher>
      <button type="button" className="flex w-[70px] flex-col items-center leading-[8px]">
        <RenderCube />
        <span className="pt-[2px]">Визуализировать<br />сцену</span>
      </button>
      <div className="flex flex-col gap-[3px] pt-px">
        <IconButton label="Сохранить изображение"><Floppy badge="#3b9cd9" /></IconButton>
        <IconButton label="Камера"><CameraEdit /></IconButton>
        <IconButton label="Пакет"><CubeBlue /></IconButton>
      </div>
    </Group>
    <Group title="Утилиты" className="w-[53px]">
      <div className="grid grid-cols-[20px_20px] items-center gap-[3px] pt-px pl-1">
        <IconButton label="Точка" className="justify-start"><Crosshair /></IconButton>
        <IconButton label="Полигон" className="justify-start"><PolyTool /><Caret /></IconButton>
        <IconButton label="Обход" className="justify-start"><Walker /><Caret /></IconButton>
        <span />
        <IconButton label="Штамп" className="justify-start"><Stamp /><Caret /></IconButton>
      </div>
    </Group>
    <Group title="LumenRT" className="w-[39px]">
      <div className="flex flex-1 flex-col items-center gap-[3px] pt-2">
        <IconButton label="LumenRT"><LumenTriangle color="#e0b03a" /></IconButton>
        <IconButton label="LumenRT экспорт"><LumenTriangle color="#b8bcc0" /></IconButton>
      </div>
    </Group>
  </div>
);

/* ---------- properties panel ---------- */

const PropertiesPanel = () => (
  <aside className="flex w-[274px] shrink-0 flex-col border-r-[3px] border-[#8a8f94]">
    <div className="flex h-[13px] items-center gap-1 bg-linear-to-b from-[#a9abad] to-[#c3c5c7] px-[2px]">
      <h2 className="flex-1">Свойства</h2>
      <IconButton label="Меню панели"><Caret className="size-[6px]" /></IconButton>
      <IconButton label="Закрепить панель">
        <Icon className="size-2"><path d="M3.500 1h5v6h-5zM1.500 7h9M6 7v5" stroke="#111" strokeWidth="1.500" /></Icon>
      </IconButton>
      <IconButton label="Закрыть панель">
        <Icon className="size-2"><path d="m1 1 10 10M11 1 1 11" stroke="#000" strokeWidth="2.200" /></Icon>
      </IconButton>
    </div>
    <div className="h-[143px] border border-[#777] bg-white" />
    <div className="mt-[2px] flex flex-1 flex-col items-center border border-[#777] bg-[#eeeeee] pt-[206px]">
      <p className="whitespace-nowrap">Для просмотра свойств необходимо выделить элемент.</p>
    </div>
  </aside>
);

/* ---------- 3D view ---------- */

// Ground plane in homogeneous form: origin, the two vanishing points and the grid step along each axis.
const ORIGIN = [630, 640];
const VANISH_X = [2837, -9];
const VANISH_Y = [135, -9];
const STEP_X = 0.0234;
const STEP_Y = 0.0426;

const gridDots = () => {
  let d = "";
  for (let i = -40; i <= 80; i++) {
    for (let j = -16; j <= 92; j++) {
      const u = i * STEP_X;
      const v = j * STEP_Y;
      const w = 1 + u + v;
      if (w < 0.3) continue;
      const x = Math.round((ORIGIN[0] + u * VANISH_X[0] + v * VANISH_Y[0]) / w);
      const y = Math.round((ORIGIN[1] + u * VANISH_X[1] + v * VANISH_Y[1]) / w);
      if (x > 310 && x < 1240 && y > 130 && y < 682) d += `M${x} ${y}h1v1h-1z`;
    }
  }
  return d;
};

const GRID = gridDots();

const KNOBS = [[881, 219], [900, 230], [862, 235], [899, 256], [861, 261], [880, 270]];

const Machine = () => (
  <svg viewBox="317 133 919 546" preserveAspectRatio="xMidYMid slice" className="absolute inset-0 size-full" role="img" aria-label="Модель стиральной машины">
    <defs>
      <linearGradient id="top" x1="0" y1="0" x2="1" y2=".4">
        <stop offset="0" stopColor="#5c5c5a" />
        <stop offset="1" stopColor="#4c4a4c" />
      </linearGradient>
      <linearGradient id="side" x1="0" y1="0" x2="1" y2="0">
        <stop offset="0" stopColor="#444" />
        <stop offset="1" stopColor="#4b4a4b" />
      </linearGradient>
      <linearGradient id="column" x1="0" y1="0" x2="1" y2="0">
        <stop offset="0" stopColor="#474647" />
        <stop offset=".5" stopColor="#5f605e" />
        <stop offset="1" stopColor="#484748" />
      </linearGradient>
      <linearGradient id="fillet" x1="0" y1="0" x2="0" y2="1">
        <stop offset="0" stopColor="#50504f" />
        <stop offset=".6" stopColor="#5e605d" />
        <stop offset="1" stopColor="#4a494a" />
      </linearGradient>
      <linearGradient id="glass" x1="0" y1="0" x2="1" y2=".5">
        <stop offset="0" stopColor="#2c4674" />
        <stop offset=".5" stopColor="#31436e" />
        <stop offset=".75" stopColor="#20425f" />
        <stop offset="1" stopColor="#224d60" />
      </linearGradient>
      <linearGradient id="knob" x1="0" y1="0" x2=".3" y2="1">
        <stop offset="0" stopColor="#cf62c8" />
        <stop offset=".7" stopColor="#d468cc" />
        <stop offset="1" stopColor="#7c5a7c" />
      </linearGradient>
    </defs>
    <path d="M317 133h919v546H317z" fill="#dcdcdc" />
    <path d={GRID} fill="#9c9c9c" />
    <path d="M317 231 660 679M480 685 1236 464" stroke="#989898" strokeWidth=".8" />

    <path d="M538 248h-9q-3 0-3 3t3 3h9zM556 463h-6q-2 0-2 2.500t2 2.500h6z" fill="#f2f2f2" stroke="#111" />
    <path d="m561 547 69 94 273-79" stroke="#fff" strokeWidth="2.500" fill="none" />
    <path d="m559 547 71 95 275-80" stroke="#222" strokeWidth=".8" fill="none" />

    <path d="M534 200q2-11 11-13l262-22 98 24q13 5 12 18l-9 203-7 150-262 75-11 2-67-90-11-137z" fill="#474647" />
    <path d="m534 198 62 40 6 72 9 90 13 213 4 24-67-90-11-137z" fill="url(#side)" />
    <path d="m545 187 262-22 96 25-293 29z" fill="url(#top)" />
    <path d="M610 219 903 190q13 2 14 15L619 238q-3-17-9-19z" fill="url(#fillet)" />
    <path d="m534 199 63 38q1-15 13-18l-65-32q-10 1-11 12z" fill="url(#fillet)" />
    <path d="M597 232q4-12 13-12 8 3 9 18l5 79 15 315-11 5-15-237-7-83-5-10z" fill="url(#column)" />
    <g fill="none" stroke="#161418" strokeWidth=".9">
      <path d="M534 200q2-11 11-13l262-22 98 24q13 5 12 18l-9 203-7 150-262 75M534 200l16 210 12 137 66 90" />
      <path d="m545 187 65 32 293-29M534 199l69 39 16-1 298-32M614 222l297-31M597 230q4-11 13-11 8 3 9 18l5 80 4 93 12 222M597 230l5 80q2 7 7 7l15 0 289-44" />
      <path d="m603 226 5 91 3 83 13 213 4 24M604 237q0-14 8-18M910 210l-12 350" />
    </g>

    <path d="m629 244 73-8 2 59-71 11z" fill="#0202f2" stroke="#000040" />
    <text x="634" y="331" transform="rotate(-5 634 331)" fontFamily="'Liberation Serif', serif" fontSize="11" fontWeight="700" fill="#0c0c0c">Название</text>

    {KNOBS.map(([x, y]) => (
      <g key={`${x}-${y}`}>
        <path d={`M${x - 3} ${y - 5.500} ${x + 3} ${y - 5}v10.500l-6-1q-3-1-3.500-5 .5-4 3.500-5z`} fill="#a8a8a0" />
        <ellipse cx={x + 3} cy={y + 0.5} rx="4" ry="5.300" fill="#dcdcd4" stroke="#50504a" strokeWidth=".8" />
      </g>
    ))}

    <path d="M778 235q9 1 14 8l7 5-6 23-15-1q-8 1-13-5-5-6-4-13 2-16 17-17z" fill="url(#knob)" />
    <ellipse cx="793" cy="259" rx="7.500" ry="11.500" fill="#e878de" stroke="#f23ee6" />
    <circle cx="786" cy="259" r="4" fill="#f3d8f0" />
    <path d="M776 259h20M786 249v20" stroke="#fff" strokeOpacity=".7" strokeWidth="2.400" />
    <path d="M776 259h20M786 249v20" stroke="#1a1a1a" strokeWidth="1.200" />

    <ellipse cx="772" cy="413" rx="120" ry="99.500" transform="rotate(-57 772 413)" fill="#424442" stroke="#151515" />
    <g fill="none" transform="rotate(-57 772.500 413.700)">
      <ellipse cx="772.500" cy="413.700" rx="110.500" ry="92" stroke="#4a4c4a" strokeWidth="15" />
      <ellipse cx="772.500" cy="413.700" rx="110.500" ry="92" stroke="#525451" strokeWidth="12" />
      <ellipse cx="772.500" cy="413.700" rx="110.500" ry="92" stroke="#595b58" strokeWidth="8" />
      <ellipse cx="772.500" cy="413.700" rx="110.500" ry="92" stroke="#5f615e" strokeWidth="4" />
    </g>
    <ellipse cx="773" cy="414.500" rx="101.500" ry="85" transform="rotate(-58 773 414.500)" fill="url(#glass)" stroke="#0c1016" strokeWidth="1.200" />
    <path d="m752 438 104 0-22 32-27 25-32 14-33 1-29-13z" fill="#25506a" fillOpacity=".7" />
    <path d="M785 318q15 43-6 85-10 20-27 35" fill="none" stroke="#14202e" strokeWidth=".7" />
    <path
      d="M765 389l10-71M765 389l45-69M765 389l41-71M765 389l73-52M765 389l101-29M765 389l98 9M765 389l90 46M765 389l-73 5M765 389l-53-30M765 389l-23-56M765 389l-81 44M765 389l-73 83M765 389l-76 76M765 389l-13 49M765 389l-78 46M752 438h104M752 438l82 32M752 438l55 57M752 438l23 71M752 438l-10 72M752 438l-39 59M752 438l-59 34M752 438q-30 24-65 24"
      fill="none"
      stroke="#070c14"
      strokeWidth=".9"
    />
    <path d="M853 352h9q7 2 7 9t-7 9l-1-2q3-7-1-12z" fill="#3c3e3c" stroke="#111" strokeWidth=".8" />

    <ellipse cx="881" cy="541" rx="14" ry="17" transform="rotate(15 881 541)" fill="#434343" stroke="#2c382c" strokeDasharray="3 2" />
    <ellipse cx="883" cy="540" rx="12.500" ry="15" transform="rotate(20 883 540)" fill="#3f4440" stroke="#0f1a0f" />
    <ellipse cx="883" cy="540" rx="8" ry="10.500" transform="rotate(20 883 540)" fill="#4c4a4c" stroke="#101010" />

    <path d="m640 634 22-8-3-1 16 1-8 14-2-4-22 4z" fill="#c25a4c" fillOpacity=".85" />
    <path d="m640 635 33-8" stroke="#c01c14" strokeWidth="2" />
    <path d="m650 630 12 5m1-7-14 9" stroke="#331111" />
    <path d="m605 637 8-20 20 3-4 3 3 10-14 3-5-8z" fill="#2ccf3e" fillOpacity=".85" />
    <path d="m612 624 10 8m1-7-8 10" stroke="#0c3a10" strokeWidth=".8" />
    <path d="M629 641v-24" stroke="#1c1ce0" strokeWidth="1.600" />
    <circle cx="630" cy="641" r="8" fill="#6d6df2" fillOpacity=".9" />
    <path d="m625 635 5 6 8-3" stroke="#11118a" fill="none" />
  </svg>
);

const Tooltip = () => (
  <div role="tooltip" className="absolute top-[139px] left-[481px] border border-[#8a8a8a] bg-white px-[3px] py-[1px] leading-[10px] whitespace-nowrap text-[#444]">
    <p>Smart тело</p>
    <p>Слой: Сталь</p>
    <p>Stainless steel назначается по слою к: [Сталь:9]</p>
  </div>
);

const MaterialDialog = () => (
  <section role="dialog" aria-label="Подключение материала" className="absolute top-[201px] right-[77px] h-[124px] w-[213px] border border-[#7c7c7c] bg-[#eeeeee]">
    <div className="flex h-[19px] items-center gap-[2px] bg-white pl-1">
      <DialogGlyph />
      <h2 className="flex-1 whitespace-nowrap">Подключение материала</h2>
      <IconButton label="Свернуть диалог" className="w-[28px]"><Icon className="size-2"><path d="M1 6h10" stroke="#222" strokeWidth="1.500" /></Icon></IconButton>
      <IconButton label="Развернуть диалог" className="w-[28px]"><Icon className="size-2"><path d="M1.500 1.500h9v9h-9z" stroke="#ccc" strokeWidth="1.500" /></Icon></IconButton>
      <IconButton label="Закрыть диалог" className="w-[30px]"><Icon className="size-2"><path d="m.5.5 11 11m0-11-11 11" stroke="#222" strokeWidth="1.500" /></Icon></IconButton>
    </div>
    <div className="flex items-center gap-[2px] px-2 pt-[9px]">
      <IconButton label="Назначить по слою" className="size-[17px]"><LayerStack className="size-4" /></IconButton>
      <IconButton label="Удалить назначение" className="size-[17px]">
        <Icon className="size-4">
          <path d="m1 9 3-2.500 6-.5-3 3zM1 6.700l3-2.500 6-.5-3 3zM1 4.400l3-2.500 6-.5-3 3z" fill="#cfe8f8" stroke="#2f8fc4" strokeWidth=".8" />
          <RedCross />
        </Icon>
      </IconButton>
      <IconButton label="Подключить" className="size-[19px] border border-[#3a6ea8] bg-[#b8d4ee]"><ApplyMaterial className="size-4" /></IconButton>
      <IconButton label="Отключить" className="size-[17px]"><RemoveMaterial className="size-4" /></IconButton>
      <IconButton label="Редактор материалов" className="size-[18px] border-l border-[#bbb]"><EditMaterial badge className="size-4" /></IconButton>
    </div>
    <div className="flex gap-[6px] px-2 pt-2">
      <svg viewBox="0 0 60 60" className="size-[58px] border border-white" aria-label="Образец материала" role="img">
        <defs>
          <radialGradient id="green" cx=".45" cy=".4" r=".6">
            <stop offset="0" stopColor="#3b8f38" />
            <stop offset=".6" stopColor="#256e26" />
            <stop offset="1" stopColor="#1c4a1c" />
          </radialGradient>
        </defs>
        <path d="M0 0h60v60H0z" fill="#3a3838" />
        <path d="M0 12 60 16v44H0z" fill="#a9a6a6" />
        <path d="m0 20 40 40M0 32l28 28M0 44l16 16M60 20 20 60M60 31 31 60M60 42 42 60M0 28l14-14M0 42l20-18M0 54 22 34M60 50 40 30M60 36 44 18" stroke="#4c4a4a" />
        <circle cx="30" cy="28" r="22.500" fill="url(#green)" />
        <path d="M18 13q9-8 20-5l-5 5-11 3zM39 15q9 4 11 14l-4 6-9-6 1-7z" fill="#c8dcc6" fillOpacity=".75" />
        <path d="m10 26 9-5-2 8 6 3-8 4zM26 19l6 3-3 6zM22 30l8-3 3 6-7 2z" fill="#9ccc98" fillOpacity=".6" />
        <path d="M9 36q21 5 42 0-5 14-21 14.500Q14 50 9 36z" fill="#4f7a3c" fillOpacity=".6" />
      </svg>
      <div className="flex flex-col gap-[1px]">
        <label htmlFor="material" className="leading-[10px]">Материал:</label>
        <div className="flex items-center gap-1">
          <div className="relative flex h-[15px] w-[91px] items-center border border-[#a5a5a5] bg-[#e2e2e2]">
            <select id="material" className="w-full appearance-none bg-transparent outline-none">
              <option>Lugnuts</option>
            </select>
            <Caret className="absolute right-[3px] size-[6px]" />
          </div>
          <IconButton label="Открыть палитру">
            <Icon><path d="M1 10V3h4l1 1.500h4V10z" fill="#1b5f9e" /><path d="m1 10.500 2-5h8.500l-2 5z" fill="#4a9ade" /></Icon>
          </IconButton>
          <IconButton label="Просмотр">
            <Icon><path d="M1.500 2h9v8.500h-9z" fill="#fff" stroke="#5a6a8a" /><path d="m3 9.500 2.500-4L7 8l1-1 1.500 2.500zM3 3h6v1H3z" fill="#4a5a9a" /></Icon>
          </IconButton>
        </div>
      </div>
    </div>
  </section>
);

const WindowButton = ({ label, className, children }: { label: string; className: string; children: ReactNode }) => (
  <button type="button" aria-label={label} className={clsx("flex h-[11px] w-5 items-center justify-center rounded-xs border", className)}>
    <Icon className="size-2">{children}</Icon>
  </button>
);

const Divider = () => <span className="mx-[2px] h-3 w-px bg-[#b5b5b5]" />;

const ViewWindow = () => (
  <main className="flex min-w-0 flex-1 flex-col">
    <div className="flex h-[21px] items-end gap-[2px] bg-linear-to-b from-[#7f9fc8] to-[#b9cfe8] pr-px pb-[3px] pl-1">
      <Icon className="size-[10px]"><path d="m1 3 3 1v7L1 9.500zM4 4l7-2v7l-7 2z" fill="#1668b8" /><path d="m1 3 6-2 4 1-7 2z" fill="#d8ecfa" /></Icon>
      <h2 className="flex-1 pl-[2px] leading-[10px]">Вид 1, 3D Metric Design</h2>
      <WindowButton label="Свернуть окно" className="border-[#54749c] bg-[#b4cbe4]"><path d="M2 7h8v3H2z" fill="#fff" stroke="#345" /></WindowButton>
      <WindowButton label="Восстановить окно" className="border-[#54749c] bg-[#b4cbe4]"><path d="M1 4h7v6H1zM4 4V1h7v6H8" stroke="#345" strokeWidth="1.500" /></WindowButton>
      <WindowButton label="Закрыть окно" className="border-[#6c2c22] bg-[#c8452f]"><path d="m2 2 8 8m0-8-8 8" stroke="#fff" strokeWidth="2.500" /></WindowButton>
    </div>
    <div className="flex h-4 items-center gap-[2px] bg-[#f0f0f0] px-[3px]">
      <IconButton label="Атрибуты вида"><Screen glyph="gear" /><Caret className="size-[5px]" /></IconButton>
      <IconButton label="Стиль отображения"><GreenShapes /></IconButton>
      <IconButton label="Яркость"><Sun /><Caret className="size-[5px]" /></IconButton>
      <Divider />
      <IconButton label="Обновить вид"><Broom /></IconButton>
      <IconButton label="Увеличить"><Magnify sign="M5.500 4.500h3.500M7.200 2.800v3.500" /></IconButton>
      <IconButton label="Уменьшить"><Magnify sign="M5.500 4.500h3.500" /></IconButton>
      <IconButton label="Область" className="h-[15px] border border-[#3f5f94] bg-[#b9cbe6]"><Magnify /></IconButton>
      <IconButton label="Вписать"><Screen glyph="fit" /></IconButton>
      <IconButton label="Повернуть вид"><RotateView /></IconButton>
      <IconButton label="Панорама"><Hand /></IconButton>
      <Divider />
      <IconButton label="Обход"><Feet /></IconButton>
      <IconButton label="Полет"><Plane /></IconButton>
      <IconButton label="Камера вида"><Screen glyph="camera" /></IconButton>
      <IconButton label="Предыдущий вид"><Screen glyph="left" /></IconButton>
      <IconButton label="Следующий вид"><Screen glyph="right" /></IconButton>
      <Divider />
      <IconButton label="Копировать вид"><Windows className="size-3" /></IconButton>
      <IconButton label="Объем отсечения"><ClipCube /></IconButton>
      <IconButton label="Маска отсечения"><CutCircle color="#2f8fc4" /></IconButton>
      <IconButton label="Очистить отсечение"><CutCircle color="#6fa0b8" dash /></IconButton>
    </div>
    <div className="relative flex-1 overflow-hidden bg-[#dcdcdc]">
      <Machine />
      <div className="absolute right-3 bottom-[14px] text-right font-['Lato','Open_Sans',sans-serif] text-[19px] leading-6 font-light text-[#b0b0b0]">
        <p>Мария Каширгова</p>
        <p>Курс «MicroStation 3D»</p>
        <p>Урок: Материалы для слоев</p>
      </div>
      <Tooltip />
      <MaterialDialog />
    </div>
  </main>
);

/* ---------- bottom bars ---------- */

const Grip = () => <span className="mr-1 ml-px h-3 border-l-2 border-dotted border-[#9a9a9a]" />;

const Coordinate = ({ axis, value }: { axis: string; value: string }) => (
  <label className="flex items-center gap-[3px] border-r border-[#c4c4c4] pr-1 pl-1 last:border-r-0">
    <b className="w-2 text-[11px]">{axis}</b>
    <input defaultValue={value} className="h-[13px] w-[70px] border border-[#c2c2c2] bg-white px-1 text-[#777] outline-none" />
  </label>
);

const CUBES = [
  ["Сверху", "m1.500 4 7-2.500 8 1.500-4.500 2.500z"],
  ["Спереди", "m1.500 4 10.500 1.500v11l-9.500-1.500z"],
  ["Справа", "m12 5.500 4.500-2.500v10.500l-4.500 3z"],
  ["Изометрия", "m1.500 4 10.500 1.500 4.500-2.500v10.500l-4.500 3-9.500-1.500z"],
  ["Снизу", "m2.500 15 6-4 8 2.500-4.500 3z"],
  ["Сзади", "m8.500 1.500 8 1.500v10.500l-8-2.500z"],
  ["Слева", "m1.500 4 7-2.500V11l-6 4z"],
  ["Левая изометрия", "m1.500 4 7-2.500 8 1.500-4.500 2.500-3.500-.5V11l-6 4z"],
];

const ViewBar = () => (
  <div className="flex h-[22px] items-center bg-[#f0f0f0]">
    <Grip />
    <IconButton label="Назад"><NavArrow back /><Caret className="size-[5px]" /></IconButton>
    <IconButton label="Вперед" className="ml-1"><NavArrow /><Caret className="size-[5px]" /></IconButton>
    <IconButton label="Группы видов" className="mr-[2px] ml-1">
      <Icon className="h-3 w-4"><path d="M-1 5 3 5.500V1l3 3 7 1v5q-7 3-13 0z" fill="#9a9a9a" /><ellipse cx="6.500" cy="5.500" rx="6" ry="1.500" fill="#c9c9c9" /></Icon>
      <Caret className="size-[5px]" />
    </IconButton>
    <Combo label="Группа видов" value="3D Metric Design Model" icon={<Windows className="size-3" />} className="h-[14px] w-[99px] bg-[#e4e4e4]" />
    <IconButton label="Окна видов" className="mx-[5px]"><Windows className="size-4" /></IconButton>
    <div className="flex h-[14px] divide-x divide-[#555] border border-[#999]">
      {[1, 2, 3, 4, 5, 6, 7, 8].map((n) => (
        <button key={n} type="button" className={clsx("w-[10px] text-center leading-3", n === 1 || n === 3 ? "bg-[#5f9bd6]" : "bg-[#f4f4f4]")}>
          {n}
        </button>
      ))}
    </div>
    <span className="ml-2 flex"><Grip /></span>
    <div className="-ml-1 flex">
      <Coordinate axis="X" value="115" />
      <Coordinate axis="Y" value="-363" />
      <Coordinate axis="Z" value="760" />
    </div>
    <Grip />
    <IconButton label="Повернуть" className="mr-1"><RotateView className="size-4" /></IconButton>
    <div className="flex gap-[2px]">
      <div className="flex gap-px border-l border-[#c4c4c4]">
        {CUBES.slice(0, 4).map(([label, face]) => (
          <IconButton key={label} label={label}><ViewCube face={face} /></IconButton>
        ))}
      </div>
      <div className="flex gap-px border-l border-[#c4c4c4] pl-px">
        {CUBES.slice(4).map(([label, face]) => (
          <IconButton key={label} label={label}><ViewCube face={face} /></IconButton>
        ))}
      </div>
    </div>
  </div>
);

const Cell = ({ className, children }: { className: string; children?: ReactNode }) => (
  <span className={clsx("flex h-[14px] items-center border-l border-[#777] pl-[3px]", className)}>{children}</span>
);

const StatusBar = () => (
  <footer className="flex h-[19px] items-center bg-[#eeeeee] pl-[2px]">
    <p className="w-[284px]">Подключение материала &gt; Укажите элемент</p>
    <Grip />
    <Icon className="ml-3 h-3"><path d="M2 1h4v11" stroke="#222" strokeWidth="1.200" /></Icon>
    <div className="ml-auto flex items-center">
      <Cell className="w-[19px]"><Icon><path d="M1 10h4V6h4V1" stroke="#2f7fb4" strokeWidth="1.300" /><circle cx="9.500" cy="2" r="1.500" fill="#6aa" /></Icon></Cell>
      <Cell className="w-5"><Icon><path d="M3.500 5.500V4q0-2.500 2.500-2.500T8.500 4v1.500" stroke="#666" strokeWidth="1.400" /><path d="M2 5.500h8V11H2z" fill="#8a8a1c" /></Icon></Cell>
      <Cell className="w-[88px]">По умолчанию</Cell>
      <Cell className="w-[79px]" />
      <Cell className="w-5" />
      <Cell className="w-5" />
      <Cell className="w-5" />
      <Cell className="w-5"><Icon><path d="M2 1.500h8l1 2H4v6h6l-1 1.500H1V9h2V3.500z" stroke="#777" /></Icon></Cell>
      <Cell className="w-5"><DialogGlyph /></Cell>
      <Cell className="w-5" />
      <Cell className="w-5"><Icon><path d="M2.500 1h7v10h-7z" fill="#1468b8" /><path d="M1 2h2M1 4.500h2M1 7h2M1 9.500h2M9 2h2M9 4.500h2M9 7h2M9 9.500h2" stroke="#333" /></Icon></Cell>
      <Cell className="w-5" />
      <Cell className="w-5"><Icon><path d="M2 2h8v7l-3 2H2z" stroke="#999" /><circle cx="6" cy="6" r="2" stroke="#888" /></Icon></Cell>
      <Cell className="w-[23px]"><Icon><circle cx="5.500" cy="5" r="4.500" fill="#3a8ac4" /><path d="M1 3.500h9M1 6h9" stroke="#cfe6f5" /><path d="m4.500 8.500 2.500 2.500L11.500 5" stroke="#3aa83a" strokeWidth="1.800" /></Icon></Cell>
    </div>
  </footer>
);

/* ---------- watermarks ---------- */

const Watermarks = () => (
  <div className="pointer-events-none absolute inset-0 overflow-hidden">
    <p className="absolute top-[75px] left-10 font-['Liberation_Serif',serif] text-[42px] leading-9 whitespace-nowrap text-[#cf3a34]/45">
      3D M<span className="text-[34px]">ASTER</span>
    </p>
    <svg viewBox="0 0 38 30" className="absolute top-[22px] right-[72px] h-[30px] w-[38px]" aria-hidden="true">
      <path d="M0 0h38L19 30zM8 4l11 18L30 4h-6l-5 9-5-9z" fill="#c9504a" fillOpacity=".35" fillRule="evenodd" />
    </svg>
    <p className="absolute top-[56px] right-[42px] font-['Open_Sans',sans-serif] text-[19px] leading-5 font-bold text-[#777]/35">VYSOTSKIY</p>
    <p className="absolute top-[79px] right-[46px] flex w-[92px] justify-between text-[6px] text-[#777]/50">
      {"CONSULTING".split("").map((letter, i) => (
        <span key={i}>{letter}</span>
      ))}
    </p>
    <div className="absolute bottom-[50px] left-3 font-['Lato','Open_Sans',sans-serif] text-[19px] leading-[25px] font-light text-[#b0b0b0]">
      <p>3DMaster</p>
      <p>www.3dmaster.ru</p>
      <p>Vysotskiy consulting</p>
      <p>www.bim.vc</p>
    </div>
  </div>
);

export default function App() {
  return (
    <div className="min-h-screen bg-black px-[43px]">
      <div className="relative flex min-h-screen flex-col bg-[#efefef] font-['Roboto','Noto_Sans',sans-serif] text-[8px] leading-[10px] text-[#1c1c1c]">
        <TitleBar />
        <Tabs />
        <Ribbon />
        <div className="flex flex-1">
          <PropertiesPanel />
          <ViewWindow />
        </div>
        <ViewBar />
        <StatusBar />
        <Watermarks />
      </div>
    </div>
  );
}
